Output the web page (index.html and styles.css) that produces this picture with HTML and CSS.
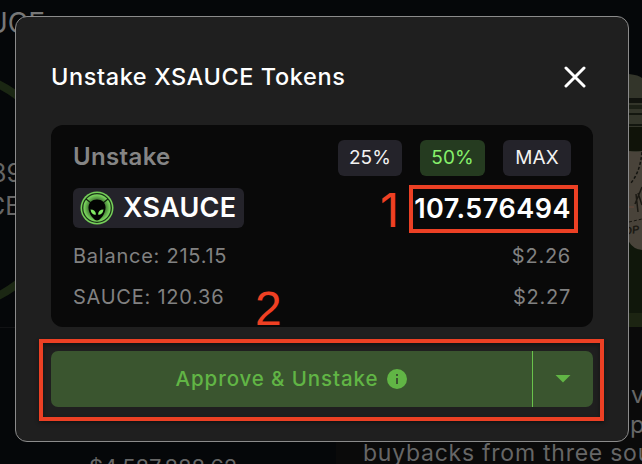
FILE: index.html
```html
<!DOCTYPE html>
<html lang="en">
<head>
<meta charset="utf-8">
<title>Unstake XSAUCE Tokens</title>
<link rel="stylesheet" href="styles.css">
</head>
<body>
<div class="backdrop">
  <svg class="art" width="642" height="464" viewBox="0 0 642 464">
    <circle cx="-54" cy="190" r="118" fill="none" stroke="#1b2713" stroke-width="8"/>
    <path d="M0 327.500H15" stroke="#111214"/>
    <rect x="336" y="327" width="306" height="137" fill="#0a0a0a"/>
    <path d="M629 74Q639 75 642 78V327H629Z" fill="#33352a"/>
    <path d="M629 98H642V103H629Z" fill="#11130e"/>
    <path d="M629 105H642V109H629Z" fill="#1c2016"/>
    <path d="M629 114H642M629 125H642" stroke="#13160f" stroke-width="2"/>
    <path d="M629 127H642V151H629Z" fill="#101309"/>
    <path d="M629 151Q636 153 642 151V250Q633 249 629 242Z" fill="#49433a"/>
    <path d="M629 242Q633 249 642 250V327H629Z" fill="#10170b"/>
    <path d="M629 313H642V327H629Z" fill="#1c2412"/>
    <path d="M642 152Q640 173 630 184" fill="none" stroke="#12120e" stroke-width="1.500" stroke-dasharray="3 2"/>
    <path d="M629 222L642 219" stroke="#171611" stroke-dasharray="3 2"/>
    <path d="M636 194L638 212M638 193L642 205M635 204L642 187" stroke="#1b1913" stroke-width="1.500"/>
    <path d="M629 207H634" stroke="#6a4938"/>
    <text class="stamp" x="624" y="235" transform="rotate(-8 624 235)">OP</text>
  </svg>
  <span class="bg bg-title">SAUCE</span>
  <span class="bg bg-amount">89</span>
  <span class="bg bg-unit">CE</span>
  <span class="bg bg-value">$4,587,888.62</span>
  <span class="bg bg-v">v</span>
  <span class="bg bg-p">p</span>
  <span class="bg bg-copy">buybacks from three sources</span>
</div>
<main class="modal">
  <header class="head">
    <h1 class="title">Unstake XSAUCE Tokens</h1>
    <svg class="close" width="22" height="22" viewBox="0 0 22 22"><path d="M2 2L20 20M20 2L2 20"/></svg>
  </header>
  <section class="card">
    <div class="row presets">
      <span class="label">Unstake</span>
      <div class="chips">
        <span class="chip quarter">25%</span><span class="chip half">50%</span><span class="chip max">MAX</span>
      </div>
    </div>
    <div class="row entry">
      <div class="token">
        <svg width="34" height="34" viewBox="0 0 34 34">
          <defs><radialGradient id="disc"><stop offset=".45" stop-color="#274b21"/><stop offset="1" stop-color="#79d35c"/></radialGradient></defs>
          <circle cx="17" cy="17" r="16.500" fill="#75cf59"/>
          <circle cx="17" cy="17" r="14.300" fill="none" stroke="#1b3518" stroke-width="1.300"/>
          <circle cx="17" cy="17" r="13" fill="url(#disc)"/>
          <path d="M6 8L11 12M28 8L23 12" stroke="#132710" stroke-width="1.300"/>
          <path d="M17 8.500C22 8.500 25.500 12 25.500 16.500C25.500 23 20 29.500 17 29.500C14 29.500 8.500 23 8.500 16.500C8.500 12 12 8.500 17 8.500Z" fill="#020402"/>
          <path d="M10.500 18.500Q15.500 18.500 16 23.500Q11.500 24.500 10.500 18.500ZM23.500 18.500Q18.500 18.500 18 23.500Q22.500 24.500 23.500 18.500Z" fill="#81e963"/>
        </svg>
        <span class="token-name">XSAUCE</span>
      </div>
      <div class="amount-wrap"><span class="amount">107.576494</span></div>
    </div>
    <div class="row detail"><span class="balance">Balance: 215.15</span><span class="usd">$2.26</span></div>
    <div class="row detail"><span class="sauce">SAUCE: 120.36</span><span class="usd">$2.27</span></div>
    <span class="step one">1</span>
    <span class="step two">2</span>
    <div class="amount-frame"></div>
  </section>
  <div class="action">
    <div class="submit"><span class="submit-text">Approve &amp; Unstake</span>
      <svg width="20" height="20" viewBox="0 0 20 20"><circle cx="10" cy="10" r="10" fill="#61b545"/><path d="M9 5H11V7H9ZM9 9H11V15H9Z" fill="#3a552f"/></svg>
    </div>
    <div class="more"><svg width="16" height="8" viewBox="0 0 16 8"><path d="M.500 0H15.500L8 7.500Z" fill="#61b545"/></svg></div>
    <div class="action-frame"></div>
  </div>
</main>
</body>
</html>
```
FILE: styles.css
```css
* { box-sizing: border-box; }
body {
  margin: 0;
  width: 642px;
  height: 464px;
  padding: 16px 13px 0 15px;
  overflow: hidden;
  background: #050709;
  font-family: Inter, "Liberation Sans", sans-serif;
  position: relative;
}
.backdrop { position: absolute; inset: 0; overflow: hidden; }
.art { display: block; }
.bg { position: absolute; color: #666; white-space: nowrap; line-height: 30px; font-size: 24px; }
.bg-title { right: 597px; top: 8px; font-size: 28px; color: #777; }
.bg-amount { left: -9px; top: 158px; font-size: 25px; }
.bg-unit { left: -13px; top: 191px; font-size: 25px; }
.bg-value { left: 89px; top: 452px; font-size: 22px; letter-spacing: -.1px; }
.bg-v { left: 631px; top: 380px; }
.bg-p { left: 630px; top: 410px; }
.bg-copy { left: 363px; top: 438px; font-size: 23px; letter-spacing: .75px; }
.stamp { font: italic bold 11px "Liberation Sans", sans-serif; fill: #1b1913; }
.modal {
  position: relative;
  width: 614px;
  height: 426px;
  padding: 0 35px;
  border: 1px solid #8b8b8b;
  border-radius: 12px;
  background: #1f1f1f;
}
.head { display: flex; justify-content: space-between; align-items: center; height: 108px; padding: 12px 7px 0 0; }
.title { margin: 0 0 2px; font-size: 23.5px; font-weight: 450; letter-spacing: .6px; color: #fff; white-space: nowrap; }
.close { fill: none; stroke: #fff; stroke-width: 3; stroke-linecap: round; }
.card { position: relative; height: 202px; padding: 15px 22px 0; border-radius: 12px; background: #090909; }
.row { display: flex; justify-content: space-between; align-items: center; }
.presets { height: 36px; margin-bottom: 12px; }
.label { margin-bottom: 3px; font-size: 24px; font-weight: 600; letter-spacing: .35px; color: #858585; }
.chips { display: flex; gap: 18px; }
.chip { display: flex; align-items: center; justify-content: center; width: 64px; height: 36px; padding-bottom: 1px; border-radius: 6px; background: #24232a; color: #f2f2f2; font-size: 19px; letter-spacing: .1px; }
.half { width: 65px; background: #253b20; color: #86f06b; }
.max { width: 68px; }
.entry { height: 40px; margin-bottom: 7px; }
.token { display: flex; align-items: center; gap: 9px; width: 171px; height: 40px; padding-left: 7px; border-radius: 6px; background: #24232a; }
.token-name, .amount { font-size: 27px; font-weight: 600; color: #fff; letter-spacing: .3px; }
.token-name { margin-bottom: 1px; }
.amount { letter-spacing: .5px; }
.amount-frame { position: absolute; left: 358px; top: 60px; width: 169px; height: 48px; border: 4px solid #ec4024; }
.detail { height: 41px; font-size: 20px; letter-spacing: .75px; color: #818181; }
.step { position: absolute; font-family: "Liberation Sans", sans-serif; font-size: 48px; line-height: 48px; color: #ef4023; }
.one { left: 329px; top: 61px; font-family: Inter, sans-serif; font-size: 47px; }
.two { left: 204px; top: 160px; }
.action { position: relative; display: flex; height: 56px; margin-top: 24px; border-radius: 7px; background: #3a552f; }
.submit { display: flex; align-items: center; justify-content: center; gap: 9px; width: 482px; border-right: 1px solid #69c24b; color: #61b545; font-size: 20.5px; font-weight: 500; letter-spacing: .9px; }
.submit-text { margin-bottom: 2px; }
.more { flex: 1; display: flex; align-items: center; justify-content: center; }
.action-frame { position: absolute; left: -12px; top: -12px; width: 565px; height: 82px; border: 4px solid #ec4024; box-shadow: 0 2px 4px #0006, inset 0 2px 4px #0006; }
```
